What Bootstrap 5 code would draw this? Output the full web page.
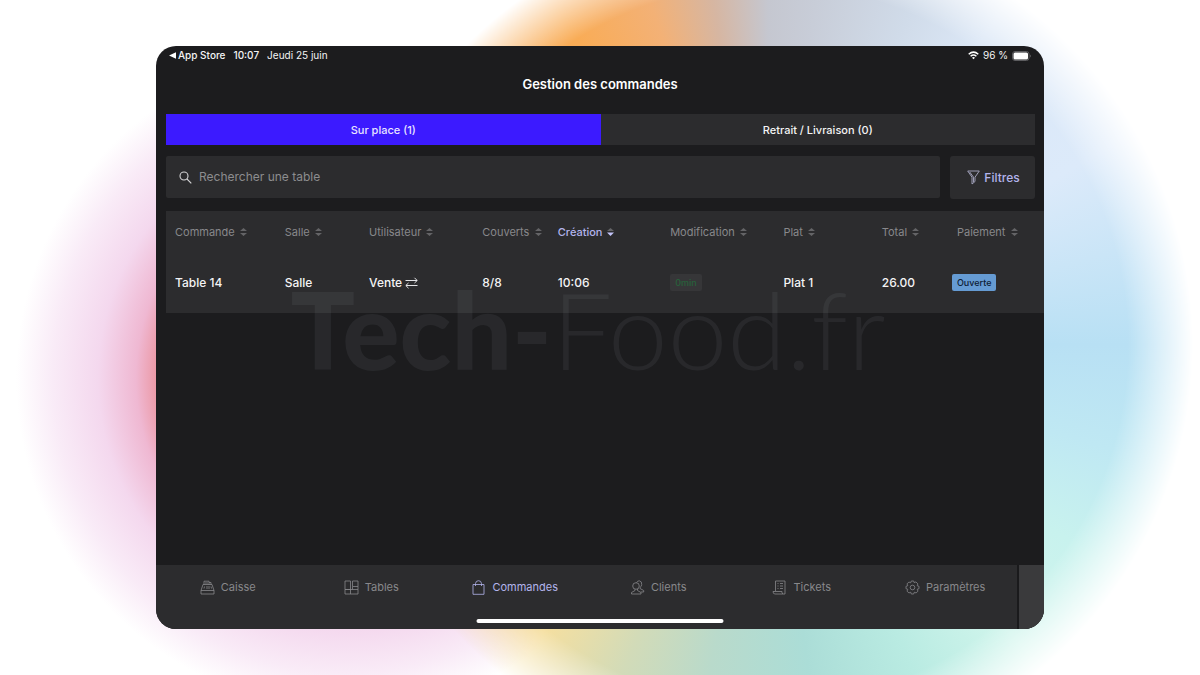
<!DOCTYPE html>
<html lang="fr" data-bs-theme="dark">
<head>
<meta charset="utf-8">
<meta name="viewport" content="width=device-width, initial-scale=1">
<title>Gestion des commandes</title>
<link href="https://cdn.jsdelivr.net/npm/bootstrap@5.3.0/dist/css/bootstrap.min.css" rel="stylesheet">
<style>
  :root { --screen: #1c1c1e; --panel: #2c2c2e; --muted: #88888b; --accent: #b3b4ec; }
  body {
    font-family: Inter, "Liberation Sans", sans-serif;
    min-height: 100vh;
    position: relative;
    overflow-x: hidden;
    background: #fff radial-gradient(circle at 29% 56%, #ea8f98 185px, #efb8d2 212px, #f4d8ee 250px, #f9ebf7 295px, #fff 332px);
  }
  body::before {
    content: "";
    position: absolute;
    inset: 0;
    background: conic-gradient(from 0deg at 64% 51%, #c5c7d0 0deg, #c8cdd8 8deg, #d0dbe9 23deg, #dbe7f6 35deg, #dceafa 60deg, #b8e0f4 90deg, #bfe8f3 107deg, #c8f2ee 123deg, #d0f5ec 140deg, #b9ebe2 156deg, #abddd7 173deg, #b9dacb 190deg, #d2dbb8 204deg, #f5dfa0 218deg, #f7b060 300deg, #f9ac56 328deg, #f3b176 341deg, #d6b6a2 351deg, #c5c7d0 360deg);
    -webkit-mask-image: radial-gradient(circle at 64% 51%, #000 360px, #0008 390px, transparent 425px);
    mask-image: radial-gradient(circle at 64% 51%, #000 360px, #0008 390px, transparent 425px);
  }
  .tablet { width: 74%; min-height: calc(100vh - 92px); background: var(--screen); border-radius: 20px; color: #f4f4f5; }
  .status-line { height: 19px; font-size: 10px; font-weight: 500; padding: 0 13px; }
  .status-day { font-weight: 400; }
  .screen-title { height: 39px; font-size: 13px; font-weight: 600; }
  .controls { padding: 10px 9px 0 10px; }
  .panel-bg { background: var(--panel); }
  .tab-btn { height: 31px; border: 0; border-radius: 0; padding: 1px 0 0; font-size: 11px; font-weight: 500; color: #f4f4f5; background: none; }
  .tab-btn.active { background: #3c1aff; color: #e8e4ff; }
  .search-row { gap: 10px; margin-top: 11px; }
  .search-box { height: 42px; padding-left: 13px; border-radius: 2px; }
  .search-box input, .search-box input:focus { background: none; border: 0; box-shadow: none; padding: 0 7px; font-size: 12px; color: #fff; }
  .search-box input::placeholder { color: #8c8c8f; opacity: 1; }
  .filter-btn { width: 85px; height: 43px; border: 0; border-radius: 3px; font-size: 12px; font-weight: 500; color: var(--accent); padding: 0 0 0 2px; }
  .orders-wrap { padding: 12px 0 0 10px; }
  .orders { table-layout: fixed; width: 100%; background: var(--panel); }
  .orders th { height: 42px; padding: 0 0 0 9px; font-size: 11px; font-weight: 400; color: var(--muted); white-space: nowrap; }
  .orders td { height: 60px; padding: 0 0 1px 9px; font-size: 12px; font-weight: 500; white-space: nowrap; }
  .orders th.sorted { color: var(--accent); font-weight: 500; }
  .orders th:last-child { padding-left: 14px; }
  .sort-icon { width: 7px; height: 8px; margin-left: 2px; fill: #646467; vertical-align: 0; }
  .pill { display: block; width: fit-content; height: 17px; line-height: 17px; border-radius: 2px; padding: 0 5px; font-size: 9px; }
  .pill-open { background: #659bd3; color: #0e2036; }
  .pill-time { background: #363638; color: #28613b; }
  .watermark { left: 0; right: 0; top: 229px; padding-right: 24px; font-family: Lato, sans-serif; font-size: 107px; line-height: 1; color: #8e959f; opacity: .1; pointer-events: none; white-space: nowrap; }
  .watermark b { font-weight: 900; }
  .watermark span { font-weight: 300; }
  .bottom-bar { border-radius: 0 0 20px 20px; overflow: hidden; height: 64px; background: var(--panel); }
  .bottom-bar a { height: 45px; font-size: 11px; font-weight: 400; color: var(--muted); text-decoration: none; gap: 6px; }
  .bottom-bar a.active { color: var(--accent); }
  .bottom-bar a svg { width: 15px; height: 15px; fill: none; stroke: currentColor; stroke-width: .8; }
  .side-strip { width: 27px; background: #3a3a3c; border-left: 2px solid #1a1a1c; }
  .home-bar { width: 247px; height: 4px; bottom: 6px; border-radius: 2px; background: #fff; left: 50%; transform: translateX(-50%); }
</style>
</head>
<body class="d-flex align-items-center justify-content-center">
<svg class="d-none" aria-hidden="true">
  <symbol id="sort" viewBox="0 0 7 8"><path d="M0 3L3.500 0L7 3ZM0 5H7L3.500 8Z"/></symbol>
</svg>

<main class="tablet d-flex flex-column position-relative">
  <div class="status-line d-flex align-items-center justify-content-between">
    <div class="d-flex gap-2">
      <span class="d-flex align-items-center"><svg width="9" height="7" viewBox="0 0 9 7" fill="#fff"><path d="M0 3.500L7 .3V6.700Z"/></svg>App Store</span>
      <span>10:07</span>
      <span class="status-day">Jeudi 25 juin</span>
    </div>
    <div class="d-flex align-items-center gap-1">
      <svg width="11" height="9" viewBox="0 0 11 9" fill="none" stroke="#fff" stroke-width="1.500"><path d="M.7 3.200Q5.500-1 10.300 3.200M2.600 5.200Q5.500 2.700 8.400 5.200"/><path d="M4 6.700Q5.500 5.500 7 6.700L5.500 8.300Z" fill="#fff" stroke="none"/></svg>
      <span class="status-day">96 %</span>
      <svg width="19" height="10" viewBox="0 0 19 10"><rect x=".5" y=".5" width="16.500" height="9" rx="2.500" fill="none" stroke="#5c5c5f"/><rect x="1.500" y="1.500" width="14.500" height="7" rx="1.500" fill="#fff"/><path d="M18 3.500Q19.400 5 18 6.500Z" fill="#77777a"/></svg>
    </div>
  </div>

  <h1 class="screen-title d-flex align-items-center justify-content-center m-0">Gestion des commandes</h1>

  <div class="controls">
    <div class="d-flex panel-bg">
      <button type="button" class="tab-btn active w-50">Sur place (1)</button>
      <button type="button" class="tab-btn w-50">Retrait / Livraison (0)</button>
    </div>
    <div class="search-row d-flex align-items-start">
      <div class="search-box panel-bg d-flex align-items-center flex-grow-1">
        <svg class="flex-shrink-0" width="13" height="13" viewBox="0 0 13 13" fill="none" stroke="#d4d4d6" stroke-width="1.100"><circle cx="5" cy="5" r="4"/><path d="M8 8L12.300 12.300"/></svg>
        <input type="text" class="form-control" placeholder="Rechercher une table" aria-label="Rechercher une table">
      </div>
      <button type="button" class="filter-btn panel-bg d-flex align-items-center justify-content-center">
        <svg width="13" height="15" viewBox="0 0 13 15" fill="none" stroke="#a9a9c4" stroke-width=".9" class="me-1"><path d="M.7 1H12.300L8 7.200V11.500L5 14V7.200ZM2.700 2L6.500 7.200V12"/></svg>Filtres
      </button>
    </div>
  </div>

  <div class="orders-wrap">
    <table class="orders">
      <colgroup>
        <col style="width:12.5%"><col style="width:9.6%"><col style="width:12.9%"><col style="width:8.6%"><col style="width:12.8%"><col style="width:12.9%"><col style="width:11.2%"><col style="width:8%"><col>
      </colgroup>
      <thead>
        <tr>
          <th>Commande <svg class="sort-icon"><use href="#sort"/></svg></th>
          <th>Salle <svg class="sort-icon"><use href="#sort"/></svg></th>
          <th>Utilisateur <svg class="sort-icon"><use href="#sort"/></svg></th>
          <th>Couverts <svg class="sort-icon"><use href="#sort"/></svg></th>
          <th class="sorted">Création <svg class="sort-icon" viewBox="0 0 7 8"><path d="M0 3L3.500 0L7 3Z"/><path d="M0 4.500H7L3.500 8Z" fill="#c3c4fa"/></svg></th>
          <th>Modification <svg class="sort-icon"><use href="#sort"/></svg></th>
          <th>Plat <svg class="sort-icon"><use href="#sort"/></svg></th>
          <th>Total <svg class="sort-icon"><use href="#sort"/></svg></th>
          <th>Paiement <svg class="sort-icon"><use href="#sort"/></svg></th>
        </tr>
      </thead>
      <tbody>
        <tr>
          <td>Table 14</td>
          <td>Salle</td>
          <td>Vente <svg width="13" height="12" viewBox="0 0 13 12" fill="none" stroke="#e4e4e6"><path d="M.5 3.500H12M9.500 .8L12.200 3.500L9.500 6M12.500 8.500H1M3.500 6L.8 8.500L3.500 11.200"/></svg></td>
          <td>8/8</td>
          <td>10:06</td>
          <td><span class="pill pill-time">0min</span></td>
          <td>Plat 1</td>
          <td>26.00</td>
          <td><span class="pill pill-open">Ouverte</span></td>
        </tr>
      </tbody>
    </table>
  </div>

  <div class="watermark position-absolute text-center" aria-hidden="true"><b>Tech-</b><span>Food.fr</span></div>

  <div class="bottom-bar d-flex mt-auto position-relative">
    <nav class="d-flex flex-grow-1">
      <a href="#" class="d-flex col-2 align-items-center justify-content-center"><svg viewBox="0 0 15 15"><path d="M3 4.500L1 10.500V14H14V10.500L12 4.500ZM1 10.500H14M4 4.500V1.200H9V4.500M9 2.500H11V4.500M4.500 6.500L4 8.500M7 6V9M9 6V9M11 6.500L11.500 8.500M5 3H8"/></svg>Caisse</a>
      <a href="#" class="d-flex col-2 align-items-center justify-content-center"><svg viewBox="0 0 15 15"><path d="M1 1H6.500V9.500H1ZM8.500 1H14V6.500H8.500ZM1 9.500H14V14H1ZM6.500 9.500V14M8.500 6.500V9.500M14 6.500V9.500"/></svg>Tables</a>
      <a href="#" class="active d-flex col-2 align-items-center justify-content-center"><svg viewBox="0 0 15 15"><path d="M2 4.500H13V14.300H2ZM4.500 6V3.500Q4.800 .7 7.500 .7T10.500 3.500V6"/></svg>Commandes</a>
      <a href="#" class="d-flex col-2 align-items-center justify-content-center"><svg viewBox="0 0 15 15"><circle cx="6" cy="6" r="3.300"/><path d="M1.500 14V12.500L5 10.500V9.200M7.500 9V10.500L11 12.500V14H1.500M6.500 2.700Q7.500 .7 9.300 .8Q12 1.200 11.700 4.500Q11.500 6.800 10 7.500V8.500L13.700 10.500V12H11"/></svg>Clients</a>
      <a href="#" class="d-flex col-2 align-items-center justify-content-center"><svg viewBox="0 0 15 15"><path d="M3.500 11V1H13V14H3Q1 14 1 11.500H10V13L11 14M5.500 3.500H6.500M8 3.500H11M5.500 6H6.500M8 6H11M5.500 8.500H6.500M8 8.500H11"/></svg>Tickets</a>
      <a href="#" class="d-flex col-2 align-items-center justify-content-center"><svg viewBox="0 0 15 15"><circle cx="7.500" cy="7.500" r="2.300"/><path d="M6.300 1H8.700L9.200 2.700L10.900 1.900L12.900 3.900L12.200 5.700L14 6.300V8.700L12.200 9.300L13 11.100L11.100 13L9.300 12.200L8.700 14H6.300L5.700 12.200L3.900 13L2 11.100L2.800 9.300L1 8.700V6.300L2.800 5.700L2 3.900L3.900 2L5.700 2.800Z"/></svg>Paramètres</a>
    </nav>
    <div class="side-strip"></div>
    <div class="home-bar position-absolute"></div>
  </div>
</main>
<script src="https://cdn.jsdelivr.net/npm/bootstrap@5.3.0/dist/js/bootstrap.bundle.min.js"></script>
</body>
</html>
